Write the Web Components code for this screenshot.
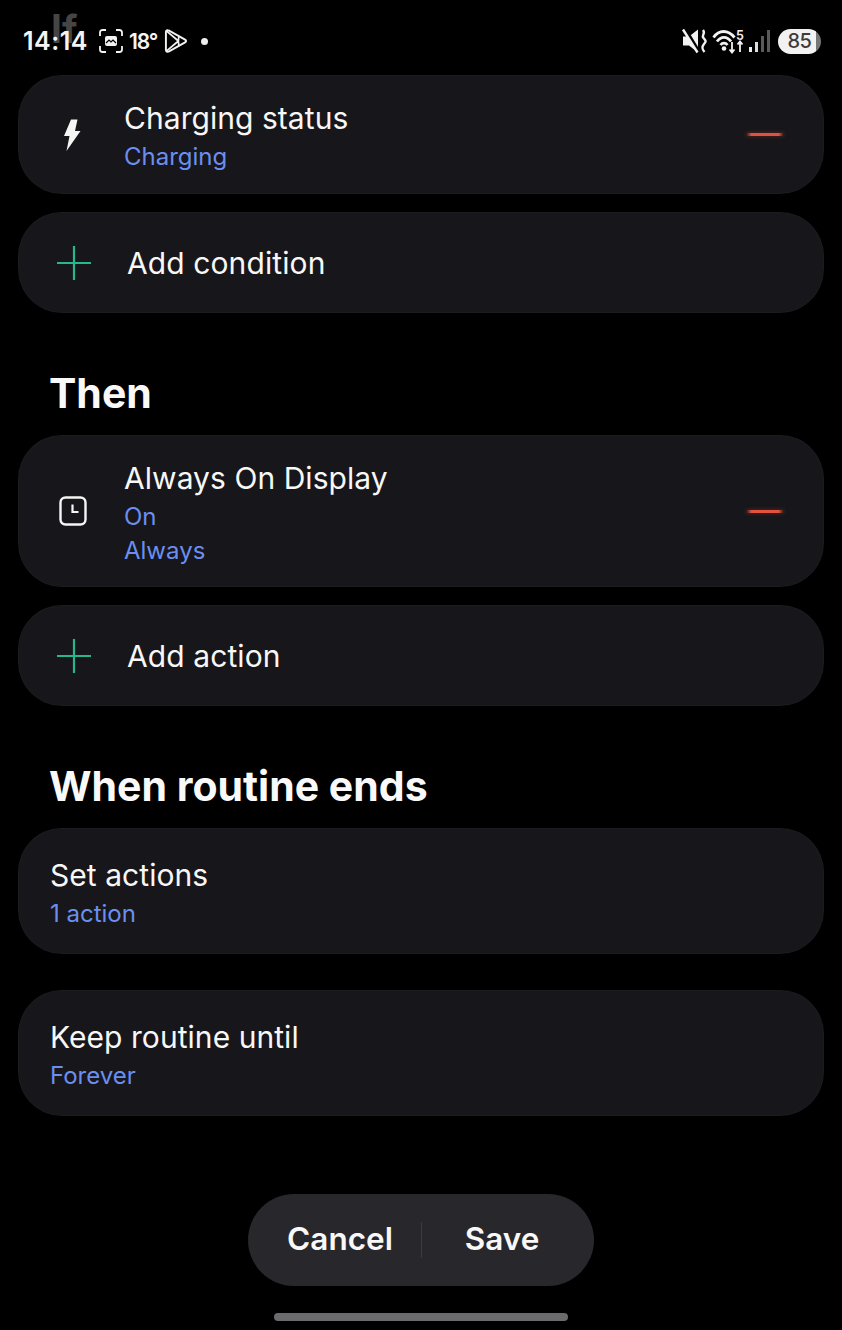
<!DOCTYPE html>
<html>
<head>
<meta charset="utf-8">
<style>
    html, body { margin: 0; background: #000; }
    body { width: 842px; height: 1330px; overflow: hidden; font-family: Inter, Roboto, sans-serif; color: #f7f7f7; }
    routine-screen { display: block; }
</style>
</head>
<body>
<routine-screen>
    <status-bar></status-bar>
    <routine-card title-text="Charging status" icon="bolt" removable style="height:119px">
        <span slot="sub">Charging</span>
    </routine-card>
    <add-row style="margin-top:18px">Add condition</add-row>
    <section-title style="margin-top:57px">Then</section-title>
    <routine-card title-text="Always On Display" icon="clock" removable style="margin-top:19px; height:152px">
        <span slot="sub">On</span>
        <span slot="sub">Always</span>
    </routine-card>
    <add-row style="margin-top:18px">Add action</add-row>
    <section-title style="margin-top:57px">When routine ends</section-title>
    <routine-card title-text="Set actions" plain style="margin-top:19px; height:126px">
        <span slot="sub">1 action</span>
    </routine-card>
    <routine-card title-text="Keep routine until" plain style="margin-top:36px; height:126px">
        <span slot="sub">Forever</span>
    </routine-card>
    <bottom-bar></bottom-bar>
</routine-screen>

<script>
class StatusBar extends HTMLElement {
    constructor() {
        super();
        this.attachShadow({ mode: 'open' });
        this.shadowRoot.innerHTML = `
            <style>
                :host { display: flex; align-items: center; justify-content: space-between; height: 75px; box-sizing: border-box; padding: 7px 21px 0 23px; position: relative; color: #f4f4f4; font-weight: 500; }
                .ghost { position: absolute; left: 51px; top: 7px; font-size: 39px; font-weight: 700; color: #454545; line-height: 44px; }
                .left, .right { display: flex; align-items: center; position: relative; }
                .time { font-size: 25px; font-weight: 600; letter-spacing: 0.5px; width: 64px; white-space: nowrap; }
                .temp { font-size: 21px; font-weight: 600; margin-left: 6px; letter-spacing: -1.200px; width: 27px; white-space: nowrap; }
                .dot { width: 7px; height: 7px; border-radius: 50%; background: #eee; margin-left: 14px; }
                svg { display: block; overflow: visible; }
                .batt { width: 43px; height: 25px; border-radius: 13px; background: linear-gradient(90deg, #f2f2f2 88%, #777 88%); color: #3c3c3c; font-size: 20px; font-weight: 500; text-align: center; line-height: 25px; margin-left: 8px; letter-spacing: -0.5px; }
            </style>
            <span class="ghost">If</span>
            <div class="left">
                <span class="time">14:14</span>
                <svg style="margin-left:12px" width="24" height="24" viewBox="0 0 24 24" fill="none" stroke="#f2f2f2" stroke-width="1.8">
                    <path d="M1 7V3.500A2.500 2.500 0 0 1 3.500 1H7M17 1h3.500A2.500 2.500 0 0 1 23 3.500V7M23 17v3.500a2.500 2.500 0 0 1-2.500 2.500H17M7 23H3.500A2.500 2.500 0 0 1 1 20.500V17"/>
                    <rect x="6" y="7" width="12" height="10" rx="2" fill="#f2f2f2" stroke="none"/>
                    <path d="M7 14l3-3 2 2 2-2 3 3" stroke="#000" stroke-width="1.200"/>
                </svg>
                <span class="temp">18°</span>
                <svg style="margin-left:8px" width="23" height="26" viewBox="0 0 24 26" fill="none" stroke="#f2f2f2" stroke-width="2" stroke-linejoin="round">
                    <path d="M2 3.500C2 2 3.500 1.200 4.800 2L22 11.500c1.400.8 1.400 2.200 0 3L4.800 24C3.500 24.800 2 24 2 22.500z"/>
                    <path d="M2.500 2.500L15 13 2.500 23.500M15.500 7.500L15 13l.5 5.500" stroke-width="1.800"/>
                </svg>
                <span class="dot"></span>
            </div>
            <div class="right">
                <svg width="24" height="26" viewBox="0 0 24 26">
                    <path d="M0 8.500h6l9-7v23l-9-7H0z" fill="#f2f2f2"/>
                    <path d="M2 1l14 23" stroke="#000" stroke-width="3.500"/>
                    <path d="M0 1.500l14.500 23" stroke="#f2f2f2" stroke-width="2.400"/>
                    <path d="M20 2c3 4-2 5 .5 8s3 3 .5 6-2 5 .5 8" fill="none" stroke="#f2f2f2" stroke-width="2.400"/>
                </svg>
                <svg style="margin-left:5px" width="33" height="26" viewBox="0 0 33 26" fill="none" stroke="#f2f2f2" stroke-width="2.800">
                    <path d="M1.500 9.500C7 1.500 16 1.500 22.500 9.500M5 13.500C9 8 15 8 19 13.500M8.500 17c2-2.500 5-2.500 7 0"/>
                    <circle cx="12" cy="20.500" r="2.300" fill="#f2f2f2" stroke="none"/>
                    <path d="M20 14v10M17.500 21.500l2.500 3 2.500-3M28 24V14M25.500 16.500l2.500-3 2.500 3" stroke-width="1.800"/>
                    <text x="24" y="12" font-family="Inter, sans-serif" font-size="12.500" font-weight="600" fill="#f2f2f2" stroke="none">5</text>
                </svg>
                <svg style="margin-left:4px" width="21" height="26" viewBox="0 0 21 26">
                    <rect x="0" y="19" width="3" height="5" fill="#eee"/>
                    <rect x="6" y="14" width="3" height="10" fill="#ddd"/>
                    <rect x="12" y="8" width="3" height="16" fill="#5a5a5a"/>
                    <rect x="18" y="2" width="3" height="22" fill="#5a5a5a"/>
                </svg>
                <div class="batt">85</div>
            </div>
        `;
    }
}

const ROW_ICONS = {
    bolt: `<svg width="18" height="34" viewBox="0 0 18 34"><path d="M8 1.500h6.500L12 13h5.500L3.500 33l3-15H1z" fill="#f5f5f5"/></svg>`,
    clock: `<svg width="28" height="32" viewBox="0 0 28 32" fill="none" stroke="#f5f5f5" stroke-width="2.400"><rect x="1.500" y="2.500" width="25" height="27" rx="5"/><path d="M13.500 9.500v7.500h6" stroke-width="2.200"/></svg>`
};

class RoutineCard extends HTMLElement {
    constructor() {
        super();
        this.attachShadow({ mode: 'open' });
    }

    connectedCallback() {
        const icon = this.getAttribute('icon');
        const removable = this.hasAttribute('removable');
        const top = this.hasAttribute('plain') ? 27 : 23;
        this.shadowRoot.innerHTML = `
            <style>
                :host { display: flex; align-items: flex-start; box-sizing: border-box; margin-left: 18px; width: 806px; background: #17161a; border-radius: 44px; padding-left: 32px; box-shadow: inset 0 0 0 1px rgba(255,255,255,.025); }
                .icon { flex: none; align-self: center; display: flex; }
                .text { flex: 1; display: flex; flex-direction: column; padding-top: ${top}px; }
                .title { font-size: 30px; line-height: 40px; margin-bottom: 2px; letter-spacing: 0.05px; color: #f7f7f7; }
                .subs { display: flex; flex-direction: column; }
                ::slotted(span) { font-size: 24px; line-height: 34px; letter-spacing: 0; color: #6b8ff0; }
                .minus { width: 38px; height: 3px; background: linear-gradient(90deg, transparent, #e2523c 14%, #e2523c 86%, transparent); box-shadow: 0 0 4px rgba(226,82,60,.35); align-self: center; margin-right: 40px; flex: none; }
            </style>
            ${icon ? `<div class="icon" style="${icon === 'bolt' ? 'padding-left:13px;width:61px' : 'padding-left:9px;width:65px'}">${ROW_ICONS[icon]}</div>` : ''}
            <div class="text">
                <div class="title">${this.getAttribute('title-text')}</div>
                <div class="subs"><slot name="sub"></slot></div>
            </div>
            ${removable ? `<div class="minus"></div>` : ''}
        `;
    }
}

class AddRow extends HTMLElement {
    constructor() {
        super();
        this.attachShadow({ mode: 'open' });
        this.shadowRoot.innerHTML = `
            <style>
                :host { display: flex; align-items: center; box-sizing: border-box; margin-left: 18px; width: 806px; height: 101px; background: #17161a; border-radius: 44px; padding-left: 38px; font-size: 30px; letter-spacing: 0.1px; color: #f7f7f7; box-shadow: inset 0 0 0 1px rgba(255,255,255,.025); }
                svg { display: block; margin-right: 35px; flex: none; }
            </style>
            <svg width="36" height="36" viewBox="0 0 36 36" stroke="#27b78d" stroke-width="2.200"><path d="M18 1v34M1 18h34"/></svg>
            <slot></slot>
        `;
    }
}

class SectionTitle extends HTMLElement {
    constructor() {
        super();
        this.attachShadow({ mode: 'open' });
        this.shadowRoot.innerHTML = `
            <style>
                :host { display: block; margin-left: 49px; font-size: 41px; line-height: 46px; font-weight: 700; color: #f9f9f9; }
            </style>
            <slot></slot>
        `;
    }
}

class BottomBar extends HTMLElement {
    constructor() {
        super();
        this.attachShadow({ mode: 'open' });
        this.shadowRoot.innerHTML = `
            <style>
                :host { display: flex; flex-direction: column; align-items: center; margin-top: 78px; }
                .pill { display: flex; align-items: center; width: 346px; height: 92px; margin-right: 1px; box-sizing: border-box; border-radius: 46px; background: #28272b; font-size: 31.500px; font-weight: 600; color: #f8f8f8; }
                .btn { flex: 1; text-align: center; padding-bottom: 3px; }
                .btn.cancel { padding-left: 12px; }
                .btn.save { padding-right: 11px; }
                .sep { width: 1px; height: 36px; background: #3c3b3f; flex: none; }
                .handle { width: 294px; height: 8px; border-radius: 4px; background: #6b6b6d; margin-top: 27px; }
            </style>
            <div class="pill">
                <span class="btn cancel">Cancel</span>
                <span class="sep"></span>
                <span class="btn save">Save</span>
            </div>
            <div class="handle"></div>
        `;
    }
}

customElements.define('status-bar', StatusBar);
customElements.define('routine-card', RoutineCard);
customElements.define('add-row', AddRow);
customElements.define('section-title', SectionTitle);
customElements.define('bottom-bar', BottomBar);
</script>
</body>
</html>
